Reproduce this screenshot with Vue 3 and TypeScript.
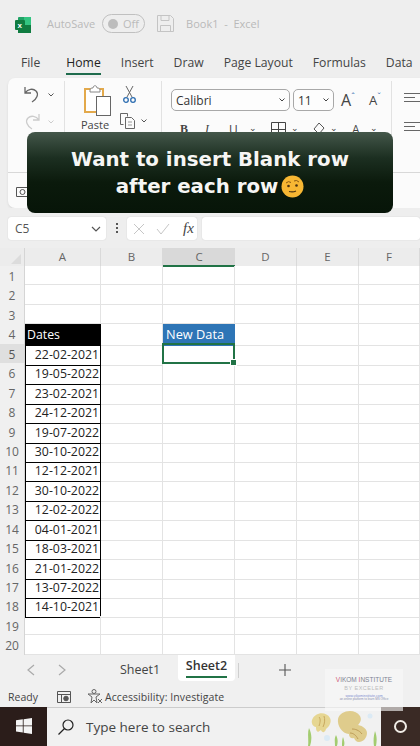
<script setup lang="ts">
const tabs = ['File', 'Home', 'Insert', 'Draw', 'Page Layout', 'Formulas', 'Data']
const cols = ['A', 'B', 'C', 'D', 'E', 'F']
const dates = ['22-02-2021','19-05-2022','23-02-2021','24-12-2021','19-07-2022','30-10-2022','12-12-2021','30-10-2022','12-02-2022','04-01-2021','18-03-2021','21-01-2022','13-07-2022','14-10-2021']
interface Row { n: number; date: string }
const rows: Row[] = Array.from({ length: 20 }, (_, i) => ({ n: i + 1, date: i >= 4 && i < 18 ? dates[i - 4] : '' }))
</script>

<template>
  <div class="app">
    <header class="title">
      <svg class="xl" width="16" height="16" viewBox="0 0 16 16">
        <rect x="3" y="0" width="13" height="16" rx="1" fill="#21a366"/>
        <rect x="3" y="8" width="13" height="8" fill="#107c41"/>
        <rect x="9" y="0" width="7" height="8" fill="#33c481"/>
        <rect y="3" width="10" height="10" rx="1" fill="#107c41"/>
        <text x="2.4" y="11" font-size="8" font-weight="700" fill="#fff" font-family="Liberation Sans">x</text>
      </svg>
      <span class="dim autosave">AutoSave</span>
      <span class="toggle"><i></i><b>Off</b></span>
      <svg class="save" width="17" height="17" viewBox="0 0 17 17" fill="none" stroke="#c4c4c4"><path d="M.5.5h13l3 3v13H.5z"/><path d="M4 .5v5h8v-5M3.5 16.5v-6h10v6"/></svg>
      <span class="dim">Book1&nbsp; -&nbsp; Excel</span>
    </header>

    <nav class="tabs">
      <span v-for="t in tabs" :key="t" class="tab" :class="{ on: t === 'Home' }">{{ t }}</span>
    </nav>

    <section class="ribbon">
      <div class="main">
        <div class="g undo">
          <svg width="16" height="17" viewBox="0 0 16 17" fill="none" stroke="#666" stroke-width="1.3"><path d="M1 1v6h6M1 7c3-4 8-5 11-2 3 3 1 8-4 11"/></svg>
          <svg class="mini" width="6" height="4" viewBox="0 0 6 4" fill="none" stroke="#555"><path d="M.5.5 3 3 5.500.5"/></svg>
          <svg class="redo" width="16" height="17" viewBox="0 0 16 17" fill="none" stroke="#ccc" stroke-width="1.3"><path d="M15 1v6H9M15 7c-3-4-8-5-11-2-3 3-1 8 4 11"/></svg>
          <svg class="mini" width="6" height="4" viewBox="0 0 6 4" fill="none" stroke="#ccc"><path d="M.5.5 3 3 5.500.5"/></svg>
        </div>
        <div class="g clip">
          <div class="paste">
            <svg width="28" height="32" viewBox="0 0 28 32" fill="none">
              <path d="M1 4h18v23H1z" fill="#fff" stroke="#e3a94b" stroke-width="2"/>
              <path d="M6 5c0-2 2-2 3-2 0-3 4-3 4 0 1 0 3 0 3 2v2H6z" fill="#fff" stroke="#888"/>
              <rect x="12.500" y="11.500" width="14" height="19" fill="#fff" stroke="#666"/>
            </svg>
            <span>Paste</span>
          </div>
          <div class="clip-side">
            <svg width="13" height="17" viewBox="0 0 13 17" fill="none"><path d="M3 0l6 11M10 0 4 11" stroke="#666"/><circle cx="3" cy="14" r="2.300" stroke="#2b6cb0" stroke-width="1.300"/><circle cx="10" cy="14" r="2.300" stroke="#2b6cb0" stroke-width="1.300"/></svg>
            <div class="copy">
              <svg width="16" height="16" viewBox="0 0 16 16" fill="none" stroke="#666"><path d="M3.500 11.500H.5V.5h7v3"/><path d="M5.500 4.500h6l3 3v8h-9z"/><path d="M8 9h4M8 12h4" stroke="#999"/></svg>
              <svg width="6" height="4" viewBox="0 0 6 4" fill="none" stroke="#555"><path d="M.5.5 3 3 5.500.5"/></svg>
            </div>
          </div>
        </div>
        <div class="g font">
          <div class="fr1">
            <span class="box fname">Calibri<svg width="6" height="4" viewBox="0 0 6 4" fill="none" stroke="#444"><path d="M.5.5 3 3 5.500.5"/></svg></span>
            <span class="box fsize">11<svg width="6" height="4" viewBox="0 0 6 4" fill="none" stroke="#444"><path d="M.5.5 3 3 5.500.5"/></svg></span>
            <span class="grow">A<sup>ˆ</sup></span>
            <span class="shrink">A<sup>ˇ</sup></span>
          </div>
          <div class="fr2">
            <b>B</b><i>I</i><u>U</u><span class="cv">⌄</span>
            <svg class="bord" width="15" height="15" viewBox="0 0 15 15" fill="none" stroke="#444"><path d="M.5.500h14v14H.5zM7.500.5v14M.5 7.500h14"/></svg>
            <span class="cv">⌄</span>
            <svg class="fill" width="14" height="15" viewBox="0 0 14 15" fill="none" stroke="#555"><path d="M6 1 1 7l5 5 5-6z"/></svg>
            <span class="cv">⌄</span>
            <span class="acol">A</span>
            <span class="cv">⌄</span>
          </div>
        </div>
        <div class="g align">
          <span class="lines"><i></i><i></i><i></i></span>
          <span class="lines"><i></i><i></i><i></i></span>
        </div>
      </div>
      <div class="foot">
        <svg width="13" height="12" viewBox="0 0 13 12" fill="none" stroke="#555"><path d="M.5 2.500h12v9H.5z"/><circle cx="6.500" cy="7" r="2.500"/></svg>
      </div>
    </section>

    <div class="fbar">
      <span class="fb name">C5<svg width="10" height="6" viewBox="0 0 10 6" fill="none" stroke="#555" stroke-width="1.200"><path d="m1 1 4 4 4-4"/></svg></span>
      <span class="vdots"><i></i><i></i><i></i></span>
      <span class="fb fx">
        <svg width="12" height="12" viewBox="0 0 12 12" stroke="#c6c6c6" fill="none"><path d="m1 1 10 10M11 1 1 11"/></svg>
        <svg width="14" height="12" viewBox="0 0 14 12" stroke="#c6c6c6" fill="none"><path d="m1 6 4 5 8-10"/></svg>
        <em>fx</em>
      </span>
      <span class="fb input"></span>
    </div>

    <div class="sheet">
      <div class="hrow">
        <span class="corner"><svg width="10" height="10" viewBox="0 0 10 10"><path d="M10 0v10H0z" fill="#dcdcdc"/></svg></span>
        <span v-for="c in cols" :key="c" class="chead" :class="{ sel: c === 'C' }">{{ c }}</span>
      </div>
      <div v-for="r in rows" :key="r.n" class="row">
        <span class="rhead" :class="{ sel: r.n === 5 }">{{ r.n }}</span>
        <span class="cell" :class="{ black: r.n === 4, date: !!r.date }">{{ r.n === 4 ? 'Dates' : r.date }}</span>
        <span class="cell"></span>
        <span class="cell" :class="{ blue: r.n === 4, active: r.n === 5 }">{{ r.n === 4 ? 'New Data' : '' }}<i v-if="r.n === 5"></i></span>
        <span class="cell"></span>
        <span class="cell"></span>
        <span class="cell"></span>
      </div>
    </div>

    <div class="sheets">
      <svg class="arr" width="8" height="12" viewBox="0 0 8 12" fill="none" stroke="#aaa" stroke-width="1.200"><path d="M7 1 1 6l6 5"/></svg>
      <svg class="arr two" width="8" height="12" viewBox="0 0 8 12" fill="none" stroke="#aaa" stroke-width="1.200"><path d="m1 1 6 5-6 5"/></svg>
      <span class="s1">Sheet1</span>
      <span class="s2">Sheet2</span>
      <span class="sep"></span>
      <svg class="plus" width="12" height="12" viewBox="0 0 12 12" stroke="#555" stroke-width="1.100"><path d="M6 0v12M0 6h12"/></svg>
    </div>

    <div class="status">
      <span class="ready">Ready</span>
      <svg width="14" height="13" viewBox="0 0 14 13" fill="none" stroke="#555"><path d="M.5 1.500h13v11H.5zM.5 4.500h13M4.500 4.500v8"/><circle cx="9" cy="8.500" r="2.300" fill="#555"/></svg>
      <svg class="acc" width="16" height="15" viewBox="0 0 16 15" fill="none" stroke="#666"><circle cx="7" cy="2.500" r="2"/><path d="M1 5h12L9 8l1 6-3-3-3 3 1-6z"/><path d="m11 10 4 4m0-4-4 4"/></svg>
      <span class="acc-t">Accessibility: Investigate</span>
    </div>

    <footer class="taskbar">
      <span class="start">
        <svg width="16" height="16" viewBox="0 0 16 16" fill="#f4f4f4"><path d="M0 2.300 6.800 1.300v6.100H0zM7.600 1.200 16 0v7.400H7.600zM0 8.200h6.800v6.200L0 13.500zM7.600 8.200H16V16l-8.400-1.200z"/></svg>
      </span>
      <div class="search">
        <svg width="16" height="16" viewBox="0 0 16 16" fill="none" stroke="#222" stroke-width="1.200"><circle cx="10" cy="6" r="5"/><path d="m6.500 9.500-6 6"/></svg>
        <span>Type here to search</span>
        <svg class="jelly" width="72" height="38" viewBox="0 0 72 38">
          <path d="M0 38c1-6-1-12 1-18 3 6 3 12 1 18zM27 38c0-5-1-7 1-11 2 4 2 7 1 11zM34 38c0-4 0-6 1-9 1 3 2 6 1 9zM66 38c-1-6 0-11 1-15 2 5 2 10 1 15z" fill="#a3cc70"/>
          <path d="M4 12c3-8 14-9 18-2 2 4-1 9-4 11-1 4-4 4-5 1l-3 2c-2-1-2-3-2-5-3 0-5-4-4-7z" fill="#e6d692"/>
          <path d="M11 9c2 2 1 6 0 9M16 8c1 3 1 7-1 11" stroke="#c9a95e" fill="none"/>
          <path d="M30 11c2-9 17-11 22-3 2 4 0 7-2 9 5 1 9 4 9 8 0 5-4 9-8 9-3 0-4-2-5-4-3 1-5-1-5-4-7 0-12-9-11-15z" fill="#dfcc8c"/>
          <path d="M44 21c3 0 7 1 10 5M42 25c3 0 6 2 8 6" stroke="#bd9c57" fill="none"/>
          <circle cx="62" cy="8" r="2.500" fill="#dbeaf5"/>
          <circle cx="19" cy="30" r="3" fill="#dbeaf5"/>
        </svg>
      </div>
      <span class="cortana"><i></i></span>
    </footer>

    <div class="banner">
      <div>Want to insert Blank row</div>
      <div class="l2">after each row
        <svg width="23" height="23" viewBox="0 0 23 23">
          <circle cx="11.500" cy="11.500" r="11" fill="#f7b733"/>
          <path d="M5 8q2.500-2.500 5-.5M13 6q2.500-1.500 5 1" fill="none" stroke="#8a5a12"/>
          <circle cx="7.500" cy="11" r="1.300" fill="#4b3210"/>
          <circle cx="15.500" cy="10.500" r="1.300" fill="#4b3210"/>
          <path d="M8 16.500q4 1 7-.5" fill="none" stroke="#4b3210" stroke-width="1.100"/>
        </svg>
      </div>
    </div>

    <div class="mark">
      <div class="m1"><span>V</span>I<span class="k">KOM</span> <span>I</span>N<span class="k">STITUTE</span></div>
      <div class="m2">BY EXCELER</div>
      <div class="m3">www.vikominstitute.com</div>
      <div class="m4">an online platform to learn MS Office</div>
    </div>
  </div>
</template>

<style>
html, body { margin: 0; }
</style>

<style scoped>
.app { position: relative; width: 420px; height: 746px; overflow: hidden; background: #eeeeee; font-family: "Open Sans", "Liberation Sans", sans-serif; color: #333; }
.title { height: 46px; display: flex; align-items: center; padding: 1px 0 0 15px; box-sizing: border-box; font-size: 11px; }
.xl { flex: none; margin-top: 2px; }
.dim { color: #b9b9b9; }
.autosave { margin-left: 16px; }
.toggle { margin-left: 7px; width: 43px; height: 19px; border: 1px solid #c0c0c0; border-radius: 10px; display: flex; align-items: center; gap: 5px; padding-left: 5px; box-sizing: border-box; }
.toggle i { width: 10px; height: 10px; border-radius: 50%; background: #bdbdbd; }
.toggle b { font-weight: 400; font-size: 11px; color: #bbb; }
.save { margin: 0 12px 0 12px; }
.tabs { height: 32px; display: flex; gap: 20px; padding: 8px 0 0 21px; font-size: 12.200px; align-items: flex-start; box-sizing: border-box; white-space: nowrap; color: #444; }
.tab { padding-bottom: 1px; line-height: 17px; height: 18px; }
.tab.on { color: #222; font-weight: 500; border-bottom: 2px solid #1e6b4c; margin-left: 6px; }

.ribbon { margin-left: 8px; height: 130px; background: #fbfbfb; border-radius: 7px 0 0 7px; box-shadow: 0 1px 2px #d5d5d5; display: flex; flex-direction: column; box-sizing: border-box; }
.main { height: 95px; display: flex; border-bottom: 1px solid #d8d8d8; box-sizing: border-box; padding-top: 3px; }
.g { border-right: 1px solid #e2e2e2; box-sizing: border-box; height: 88px; }
.undo { width: 57px; display: grid; grid-template-columns: 22px 8px; align-content: start; column-gap: 2px; padding: 5px 0 0 16px; row-gap: 10px; align-items: center; }
.clip { width: 97px; display: flex; padding: 4px 0 0 17px; gap: 8px; }
.paste { display: flex; flex-direction: column; align-items: flex-start; font-size: 11px; color: #444; width: 30px; }
.paste svg { margin-left: 2px; }
.paste span { margin-left: -1px; }
.clip-side { display: flex; flex-direction: column; gap: 10px; padding-top: 1px; }
.clip-side > svg { margin-left: 3px; }
.copy { display: flex; gap: 5px; align-items: center; }
.font { width: 230px; padding: 8px 0 0 9px; }
.fr1 { display: flex; align-items: center; }
.box { height: 22px; box-sizing: border-box; border: 1px solid #a8a8a8; border-radius: 5px; background: #fdfdfd; display: flex; align-items: center; justify-content: space-between; padding: 0 4px; font-size: 12px; color: #333; }
.fname { width: 119px; }
.fsize { width: 41px; margin-left: 3px; }
.grow { font-size: 16px; margin-left: 7px; color: #444; width: 28px; }
.shrink { font-size: 13px; color: #444; }
sup { color: #2b6cb0; font-size: 9px; line-height: 0; }
.fr2 { display: flex; align-items: center; margin-top: 10px; padding-left: 9px; font-size: 12px; height: 16px; color: #444; }
.fr2 b { width: 25px; font-family: "Liberation Serif", serif; }
.fr2 i { width: 24px; font-family: "Liberation Serif", serif; }
.fr2 u { width: 20px; text-decoration: none; }
.cv { font-size: 9px; width: 14px; line-height: 6px; margin-top: -3px; }
.bord { margin-left: 8px; }
.fill { margin-left: 4px; }
.bord + .cv { margin-left: 5px; margin-right: 4px; }
.fill + .cv { margin-left: 3px; margin-right: 4px; }
.acol { width: 18px; margin-left: 4px; }
.align { border: none; flex: 1; padding: 12px 0 0 12px; }
.lines { display: flex; flex-direction: column; gap: 3px; width: 16px; margin-bottom: 20px; }
.lines i { height: 1px; background: #666; }
.lines i:nth-child(2) { width: 11px; }
.foot { padding: 7px 0 0 8px; }

.fbar { height: 40px; padding-top: 9px; box-sizing: border-box; display: flex; background: #eeeeee; align-items: flex-start; }
.fb { height: 23px; box-sizing: border-box; background: #fff; border-radius: 3px; box-shadow: 0 0 1px #bbb; display: flex; align-items: center; font-size: 12px; }
.name { margin-left: 8px; width: 98px; justify-content: space-between; padding: 0 5px 0 7px; color: #555; }
.vdots { width: 21px; display: flex; flex-direction: column; gap: 2px; align-items: center; padding-top: 6px; }
.vdots i { width: 2px; height: 2px; background: #555; }
.fx { width: 70px; padding-left: 6px; gap: 11px; }
.fx em { font-family: "Liberation Serif", serif; font-size: 15px; color: #444; margin-left: 2px; }
.input { margin-left: 5px; flex: 1; }

.sheet { background: #fff; }
.hrow, .row { display: grid; grid-template-columns: 25px 76px 62px 72px 62px 62px 61px; }
.hrow { height: 18px; background: #ececec; }
.row { height: 19.450px; }
.corner { display: flex; align-items: flex-end; justify-content: flex-end; padding: 0 3px 3px 0; border-right: 1px solid #d5d5d5; }
.chead { text-align: center; font-size: 11.500px; line-height: 17px; color: #666; border-right: 1px solid #d9d9d9; box-sizing: border-box; }
.chead.sel { background: #d9d9d9; border-bottom: 2px solid #217346; border-right: none; }
.rhead { background: #f0f0f0; color: #666; font-size: 12px; text-align: center; line-height: 21px; border-right: 1px solid #d5d5d5; overflow: hidden; }
.rhead.sel { background: #dfdfdf; color: #555; }
.cell { position: relative; border-right: 1px solid #e3e3e3; border-bottom: 1px solid #e3e3e3; box-sizing: border-box; font-size: 12.300px; line-height: 21px; white-space: nowrap; color: #222; overflow: visible; }
.black { background: #000; color: #fff; padding-left: 2px; border-color: #000; }
.blue { background: #2e75b6; color: #fff; padding-left: 3px; border-color: #2e75b6; font-size: 12.800px; }
.date { text-align: right; padding-right: 1px; border: 1px solid #000; border-top: none; }
.active { border: 2px solid #217346; margin: -1px 0 -1px -1px; height: 21px; z-index: 2; }
.active i { position: absolute; right: -4px; bottom: -4px; width: 5px; height: 5px; background: #217346; border: 1px solid #fff; }

.sheets { height: 32px; display: flex; align-items: flex-start; background: #f0f0f0; position: relative; }
.arr { margin: 9px 0 0 27px; }
.arr.two { margin-left: 23px; }
.s1 { margin-left: 54px; font-size: 12.500px; line-height: 30px; color: #444; width: 58px; }
.s2 { width: 57px; height: 26px; background: #fff; border-radius: 0 0 4px 4px; font-size: 12.500px; font-weight: 600; color: #333; text-align: center; line-height: 21px; box-sizing: border-box; position: relative; }
.s2::after { content: ""; position: absolute; left: 8px; right: 8px; bottom: 3px; height: 2px; background: #217346; }
.sep { width: 1px; height: 15px; background: #cfcfcf; margin: 8px 0 0 3px; }
.plus { margin: 9px 0 0 40px; }

.status { height: 20px; display: flex; align-items: center; background: #f0f0f0; font-size: 10.500px; color: #444; }
.ready { margin-left: 8px; width: 49px; }
.acc { margin-left: 16px; }
.acc-t { margin-left: 2px; letter-spacing: .08px; }

.taskbar { height: 39px; display: flex; background: #2b1d1a; }
.start { width: 47px; display: flex; align-items: center; justify-content: center; }
.search { position: relative; flex: 1; background: #f1f1f1; display: flex; align-items: center; gap: 12px; padding-left: 11px; font-size: 13.500px; color: #444; overflow: hidden; border-top: 1px solid #ccc; box-sizing: border-box; }
.jelly { position: absolute; left: 261px; top: 0; }
.cortana { width: 39px; background: #3a2a25; display: flex; align-items: center; justify-content: center; }
.cortana i { width: 9px; height: 9px; border: 2.500px solid #f0ece6; border-radius: 50%; }

.banner { position: absolute; left: 27px; top: 132px; width: 366px; height: 81px; border-radius: 8px; background: linear-gradient(#44574a 0%, #1c2f21 32%, #0b1a0c 62%, #071508 100%); color: #f6f6f4; font-family: "DejaVu Sans", Inter, sans-serif; font-weight: 700; font-size: 19.800px; line-height: 27px; text-align: center; padding-top: 14px; box-sizing: border-box; white-space: nowrap; }
.l2 { display: flex; justify-content: center; align-items: center; gap: 3px; }

.mark { position: absolute; left: 325px; top: 669px; width: 78px; height: 42px; background: rgba(248,248,248,.62); box-sizing: border-box; text-align: center; padding-top: 7px; font-family: "Liberation Sans", sans-serif; color: #888; overflow: hidden; }
.m1 { font-size: 6.500px; line-height: 8px; white-space: nowrap; }
.m1 span { color: #d0607a; }
.m1 .k { color: #7d8494; }
.m2 { font-size: 5.500px; line-height: 9px; color: #bdbdbd; letter-spacing: .5px; }
.m3 { font-size: 3.500px; line-height: 4px; color: #7f8fd0; margin-top: 1px; }
.m4 { font-size: 3px; line-height: 3px; color: #8a8fb0; white-space: nowrap; }
</style>
